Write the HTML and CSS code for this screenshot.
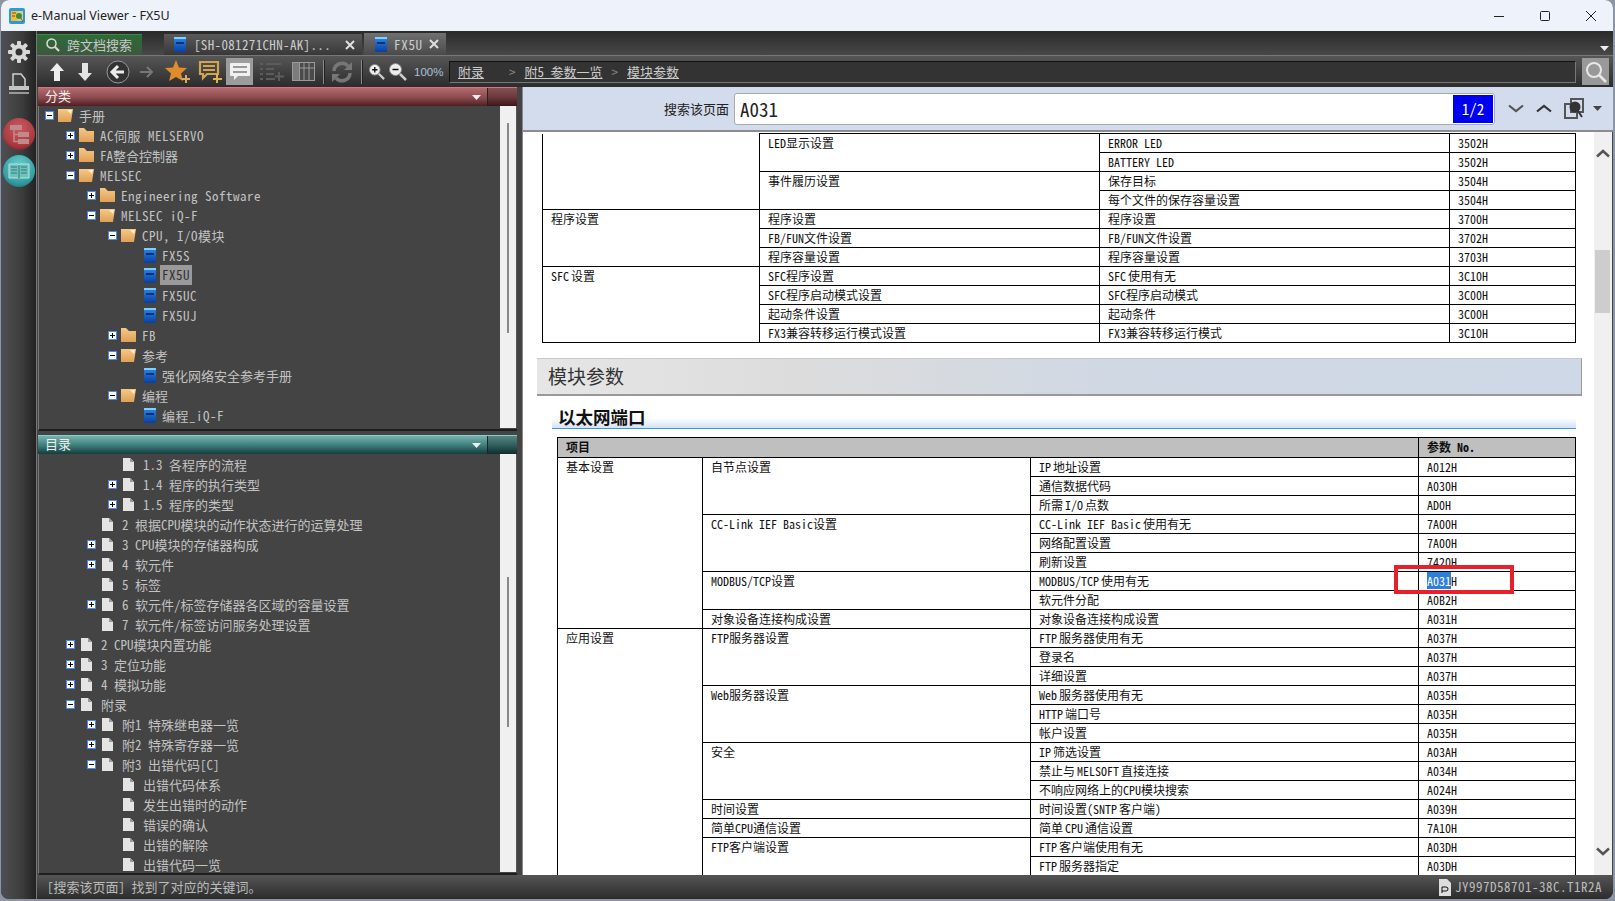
FILE: index.html
```html
<!DOCTYPE html>
<html lang="zh-CN">
<head>
<meta charset="utf-8">
<title>e-Manual Viewer - FX5U</title>
<link rel="stylesheet" href="styles.css">
</head>
<body>
<svg class="defs" width="0" height="0" aria-hidden="true">
  <defs>
    <linearGradient id="gFolder" x1="0" y1="0" x2="0" y2="1"><stop offset="0" stop-color="#f6c887"/><stop offset="1" stop-color="#dfa055"/></linearGradient>
    <linearGradient id="gBook" x1="0" y1="0" x2="0" y2="1"><stop offset="0" stop-color="#2a8ae8"/><stop offset="1" stop-color="#0a3f9e"/></linearGradient>
    <radialGradient id="gRed" cx=".5" cy=".32" r=".72"><stop offset="0" stop-color="#cc5a60"/><stop offset=".75" stop-color="#a83a40"/><stop offset="1" stop-color="#822228"/></radialGradient>
    <radialGradient id="gTeal" cx=".5" cy=".32" r=".72"><stop offset="0" stop-color="#66d0d0"/><stop offset=".75" stop-color="#359ea2"/><stop offset="1" stop-color="#1f7c82"/></radialGradient>
    <symbol id="fclosed" viewBox="0 0 15 14"><path d="M0 0H5L8 3H15V14H0Z" fill="url(#gFolder)"/></symbol>
    <symbol id="fopen" viewBox="0 0 15 14"><path d="M0 1H15L13 14H0Z" fill="url(#gFolder)"/><path d="M9 2H14L13 6Z" fill="#fbeec8"/></symbol>
    <symbol id="book" viewBox="0 0 12 15"><rect width="12" height="15" rx="1" fill="url(#gBook)"/><rect x="0" y="0" width="12" height="2" fill="#7fd0ff"/><rect x="2" y="5" width="8" height="2" fill="#0a2f80"/></symbol>
    <symbol id="doc" viewBox="0 0 11 13"><path d="M0 0H7L11 4V13H0Z" fill="#e4e4e4"/><path d="M7 0L11 4H7Z" fill="#9a9a9a"/></symbol>
    <symbol id="plus" viewBox="0 0 9 9"><rect x=".5" y=".5" width="8" height="8" fill="#fff" stroke="#4a8af0"/><path d="M2 4.5H7M4.500 2V7" stroke="#000"/></symbol>
    <symbol id="minus" viewBox="0 0 9 9"><rect x=".5" y=".5" width="8" height="8" fill="#fff" stroke="#4a8af0"/><path d="M2 4.500H7" stroke="#000"/></symbol>
    <symbol id="x" viewBox="0 0 10 10"><path d="M1 1L9 9M9 1L1 9" stroke="#e0e0e0" stroke-width="2"/></symbol>
    <symbol id="arrowdn" viewBox="0 0 9 5"><path d="M0 0H9L4.500 5Z" fill="#eee"/></symbol>
  </defs>
</svg>
<div class="window">
  <header class="title">
    <svg class="appicon" width="16" height="16" viewBox="0 0 16 16"><rect width="16" height="16" rx="2" fill="#2a9ae0"/><rect x="2" y="3" width="6" height="10" fill="#f0c030"/><rect x="8" y="3" width="6" height="10" fill="#e8d060"/><circle cx="10" cy="8" r="3" fill="#3a8a50"/><path d="M3 5H7M3 8H6" stroke="#a04020"/><path d="M12 10L14 14" stroke="#c04030"/></svg>
    <span class="title-text">e-Manual Viewer - FX5U</span>
    <div class="winbtns">
      <svg class="winbtn" width="10" height="10" viewBox="0 0 10 10"><path d="M0 5.500H10" stroke="#222"/></svg>
      <svg class="winbtn" width="10" height="10" viewBox="0 0 10 10"><rect x=".5" y=".5" width="9" height="9" rx="1" fill="none" stroke="#222"/></svg>
      <svg class="winbtn" width="10" height="10" viewBox="0 0 10 10"><path d="M0 0L10 10M10 0L0 10" stroke="#222"/></svg>
    </div>
  </header>
  <div class="app">
    <aside class="rail">
      <svg class="r-gear" width="22" height="22" viewBox="0 0 22 22"><g fill="#d8d8d8"><circle cx="11" cy="11" r="7.500"/><rect x="9" y="0" width="4" height="22" rx="1"/><rect x="0" y="9" width="22" height="4" rx="1"/><rect x="9" y="0" width="4" height="22" rx="1" transform="rotate(45 11 11)"/><rect x="9" y="0" width="4" height="22" rx="1" transform="rotate(-45 11 11)"/></g><circle cx="11" cy="11" r="3.500" fill="#333"/></svg>
      <svg class="r-print" width="20" height="22" viewBox="0 0 20 22"><path d="M4 13V1H12L16 6V13" fill="none" stroke="#d0d0d0" stroke-width="1.500"/><rect x="0" y="13" width="20" height="4" fill="#c4c4c4"/><rect x="0" y="19" width="20" height="2" fill="#999"/></svg>
      <svg class="r-ball" width="32" height="32" viewBox="0 0 32 32"><circle cx="16" cy="16" r="16" fill="url(#gRed)"/><g fill="#c08a8c"><rect x="7" y="7" width="12" height="5"/><rect x="15" y="14" width="11" height="5"/><rect x="15" y="21" width="11" height="5"/></g><path d="M11 12V23.500H15M11 16.500H15" fill="none" stroke="#c08a8c" stroke-width="1.500"/></svg>
      <svg class="r-ball b2" width="32" height="32" viewBox="0 0 32 32"><circle cx="16" cy="16" r="16" fill="url(#gTeal)"/><path d="M6 9H15L16 10L17 9H26V23H17L16 24L15 23H6Z" fill="#70c0bc" stroke="#b8e4e0"/><path d="M8 12H14M8 15H14M8 18H14M18 12H24M18 15H24M18 18H24M16 10V24" stroke="#2a7c7c"/></svg>
    </aside>
    <div class="main">
      <nav class="tabs">
        <div class="tab tab-search">
          <svg width="14" height="14" viewBox="0 0 14 14"><circle cx="5.500" cy="5.500" r="4.500" fill="none" stroke="#ddd" stroke-width="1.500"/><path d="M9 9L13 13" stroke="#ddd" stroke-width="2"/></svg>
          <span class="tab-search-label">跨文档搜索</span>
        </div>
        <div class="tab tab-doc">
          <svg class="ic-book" width="12" height="15"><use href="#book"/></svg>
          <span class="tab-label">[SH-081271CHN-AK]...</span>
          <svg class="ic-x" width="10" height="10"><use href="#x"/></svg>
        </div>
        <div class="tab tab-active">
          <svg class="ic-book" width="12" height="15"><use href="#book"/></svg>
          <span class="tab-label">FX5U</span>
          <svg class="ic-x" width="10" height="10"><use href="#x"/></svg>
        </div>
        <svg class="tabs-more" width="9" height="5"><use href="#arrowdn"/></svg>
      </nav>
      <div class="toolbar">
        <div class="tb w28"><svg width="14" height="18" viewBox="0 0 14 18"><path d="M7 0L14 8H10V18H4V8H0Z" fill="#eee"/></svg></div>
        <div class="tb w28"><svg width="14" height="18" viewBox="0 0 14 18"><path d="M7 18L14 10H10V0H4V10H0Z" fill="#e4e4e4"/></svg></div>
        <div class="tb w38"><svg width="24" height="24" viewBox="0 0 24 24"><circle cx="12" cy="12" r="11" fill="#333" stroke="#999"/><path d="M12 6L6 12L12 18M6.500 12H18" fill="none" stroke="#eee" stroke-width="3"/></svg></div>
        <div class="tb w18"><svg width="13" height="12" viewBox="0 0 13 12"><path d="M7 1L12 6L7 11M12 6H0" fill="none" stroke="#777" stroke-width="2"/></svg></div>
        <div class="tb w38 ml4"><svg width="26" height="24" viewBox="0 0 26 24"><path d="M11 0L14 7.500L22 8L16 13.500L18 21L11 17L4 21L6 13.500L0 8L8 7.500Z" fill="#e08c2c"/><path d="M21 15V23M17 19H25" stroke="#e0a85a" stroke-width="2"/></svg></div>
        <div class="tb w26"><svg width="24" height="24" viewBox="0 0 24 24"><path d="M2 2H20V14H9L5 18V14H2Z" fill="none" stroke="#d4a44c" stroke-width="2.200"/><path d="M5 6H17M5 10H17" stroke="#d4a44c" stroke-width="2"/><path d="M19 14V23M15 19H24" stroke="#e0b050" stroke-width="2"/></svg></div>
        <div class="tb w27 tb-on"><svg width="22" height="20" viewBox="0 0 22 20"><path d="M2 1H20Q21 1 21 2V13Q21 14 20 14H9L5 18V14H2Q1 14 1 13V2Q1 1 2 1Z" fill="#f0f0f0"/><path d="M4 5H18M4 10H18" stroke="#999" stroke-width="2"/></svg></div>
        <div class="tb w38"><svg width="24" height="20" viewBox="0 0 24 20"><path d="M0 2H3M6 2H21M0 7H3M6 7H14M0 12H3M6 12H14M0 17H3M6 17H15" stroke="#5c5c5c" stroke-width="2"/><path d="M19 10V19M15 14.500H24" stroke="#5c5c5c" stroke-width="2"/></svg></div>
        <div class="tb w24"><svg width="23" height="19" viewBox="0 0 23 19"><rect width="23" height="19" fill="#9a9a9a"/><rect x="1" y="1" width="6" height="17" fill="#7c7c7c"/><rect x="8" y="1" width="14" height="17" fill="#4a4a4a"/><path d="M12 1V18M17 1V18M8 6H22" stroke="#9a9a9a"/></svg></div>
        <div class="tb w16"><span class="sep"></span></div>
        <div class="tb w22"><svg width="22" height="22" viewBox="0 0 22 22"><path d="M3 10A8 8 0 0 1 17 5" fill="none" stroke="#777" stroke-width="3.500"/><path d="M19 12A8 8 0 0 1 5 17" fill="none" stroke="#777" stroke-width="3.500"/><path d="M21 1V9H13Z" fill="#777"/><path d="M1 21V13H9Z" fill="#777"/></svg></div>
        <div class="tb w16"><span class="sep"></span></div>
        <div class="tb w16"><svg width="18" height="18" viewBox="0 0 18 18"><circle cx="6.500" cy="6.500" r="6" fill="#eee" stroke="#888"/><path d="M3.500 6.500H9.500M6.500 3.500V9.500" stroke="#111" stroke-width="1.500"/><path d="M11 11L17 17" stroke="#ccc" stroke-width="2.500"/></svg></div>
        <div class="tb w26"><svg width="18" height="18" viewBox="0 0 18 18"><circle cx="6.500" cy="6.500" r="6" fill="#eee" stroke="#888"/><path d="M3.500 6.500H9.500" stroke="#111" stroke-width="1.500"/><path d="M11 11L17 17" stroke="#ccc" stroke-width="2.500"/></svg></div>
        <div class="pct">100%</div>
        <div class="crumbs">
          <a class="crumb-first">附录</a><span class="gt">&gt;</span><a>附5 参数一览</a><span class="gt">&gt;</span><a>模块参数</a>
        </div>
        <div class="tb-find"><svg width="22" height="22" viewBox="0 0 22 22"><circle cx="9" cy="9" r="7" fill="none" stroke="#e8e8e8" stroke-width="2"/><path d="M14 14L21 21" stroke="#e8e8e8" stroke-width="2.500"/></svg></div>
      </div>
      <div class="panes">
        <section class="left">
          <div class="phead red"><span class="phead-title">分类</span><svg class="phead-arrow" width="9" height="5"><use href="#arrowdn"/></svg><span class="phead-end"></span></div>
          <div class="tree tree-top">
            <ul class="rows">
              <li class="row l0"><svg class="tog" width="9" height="9"><use href="#minus"/></svg><svg class="ico" width="15" height="14"><use href="#fopen"/></svg><span class="lbl">手册</span></li>
              <li class="row l1"><svg class="tog" width="9" height="9"><use href="#plus"/></svg><svg class="ico" width="15" height="14"><use href="#fclosed"/></svg><span class="lbl la">AC伺服 MELSERVO</span></li>
              <li class="row l1"><svg class="tog" width="9" height="9"><use href="#plus"/></svg><svg class="ico" width="15" height="14"><use href="#fclosed"/></svg><span class="lbl">FA整合控制器</span></li>
              <li class="row l1"><svg class="tog" width="9" height="9"><use href="#minus"/></svg><svg class="ico" width="15" height="14"><use href="#fopen"/></svg><span class="lbl la">MELSEC</span></li>
              <li class="row l2"><svg class="tog" width="9" height="9"><use href="#plus"/></svg><svg class="ico" width="15" height="14"><use href="#fclosed"/></svg><span class="lbl la">Engineering Software</span></li>
              <li class="row l2"><svg class="tog" width="9" height="9"><use href="#minus"/></svg><svg class="ico" width="15" height="14"><use href="#fopen"/></svg><span class="lbl la">MELSEC iQ-F</span></li>
              <li class="row l3"><svg class="tog" width="9" height="9"><use href="#minus"/></svg><svg class="ico" width="15" height="14"><use href="#fopen"/></svg><span class="lbl la">CPU, I/O模块</span></li>
              <li class="row l4"><span class="tog"></span><svg class="ico bk" width="12" height="15"><use href="#book"/></svg><span class="lbl la">FX5S</span></li>
              <li class="row l4"><span class="tog"></span><svg class="ico bk" width="12" height="15"><use href="#book"/></svg><span class="lbl la sel">FX5U</span></li>
              <li class="row l4"><span class="tog"></span><svg class="ico bk" width="12" height="15"><use href="#book"/></svg><span class="lbl la">FX5UC</span></li>
              <li class="row l4"><span class="tog"></span><svg class="ico bk" width="12" height="15"><use href="#book"/></svg><span class="lbl la">FX5UJ</span></li>
              <li class="row l3"><svg class="tog" width="9" height="9"><use href="#plus"/></svg><svg class="ico" width="15" height="14"><use href="#fclosed"/></svg><span class="lbl la">FB</span></li>
              <li class="row l3"><svg class="tog" width="9" height="9"><use href="#minus"/></svg><svg class="ico" width="15" height="14"><use href="#fopen"/></svg><span class="lbl">参考</span></li>
              <li class="row l4"><span class="tog"></span><svg class="ico bk" width="12" height="15"><use href="#book"/></svg><span class="lbl">强化网络安全参考手册</span></li>
              <li class="row l3"><svg class="tog" width="9" height="9"><use href="#minus"/></svg><svg class="ico" width="15" height="14"><use href="#fopen"/></svg><span class="lbl">编程</span></li>
              <li class="row l4"><span class="tog"></span><svg class="ico bk" width="12" height="15"><use href="#book"/></svg><span class="lbl la">编程_iQ-F</span></li>
            </ul>
            <div class="vbar vbar-top"><span class="vthumb"></span></div>
          </div>
          <div class="phead teal"><span class="phead-title">目录</span><svg class="phead-arrow" width="9" height="5"><use href="#arrowdn"/></svg><span class="phead-end"></span></div>
          <div class="tree tree-bottom">
            <ul class="rows">
              <li class="row l3"><span class="tog"></span><svg class="ico dc" width="11" height="13"><use href="#doc"/></svg><span class="lbl">1.3 各程序的流程</span></li>
              <li class="row l3"><svg class="tog" width="9" height="9"><use href="#plus"/></svg><svg class="ico dc" width="11" height="13"><use href="#doc"/></svg><span class="lbl">1.4 程序的执行类型</span></li>
              <li class="row l3"><svg class="tog" width="9" height="9"><use href="#plus"/></svg><svg class="ico dc" width="11" height="13"><use href="#doc"/></svg><span class="lbl">1.5 程序的类型</span></li>
              <li class="row l2"><span class="tog"></span><svg class="ico dc" width="11" height="13"><use href="#doc"/></svg><span class="lbl">2 根据CPU模块的动作状态进行的运算处理</span></li>
              <li class="row l2"><svg class="tog" width="9" height="9"><use href="#plus"/></svg><svg class="ico dc" width="11" height="13"><use href="#doc"/></svg><span class="lbl">3 CPU模块的存储器构成</span></li>
              <li class="row l2"><svg class="tog" width="9" height="9"><use href="#plus"/></svg><svg class="ico dc" width="11" height="13"><use href="#doc"/></svg><span class="lbl">4 软元件</span></li>
              <li class="row l2"><span class="tog"></span><svg class="ico dc" width="11" height="13"><use href="#doc"/></svg><span class="lbl">5 标签</span></li>
              <li class="row l2"><svg class="tog" width="9" height="9"><use href="#plus"/></svg><svg class="ico dc" width="11" height="13"><use href="#doc"/></svg><span class="lbl">6 软元件/标签存储器各区域的容量设置</span></li>
              <li class="row l2"><span class="tog"></span><svg class="ico dc" width="11" height="13"><use href="#doc"/></svg><span class="lbl">7 软元件/标签访问服务处理设置</span></li>
              <li class="row l1"><svg class="tog" width="9" height="9"><use href="#plus"/></svg><svg class="ico dc" width="11" height="13"><use href="#doc"/></svg><span class="lbl">2 CPU模块内置功能</span></li>
              <li class="row l1"><svg class="tog" width="9" height="9"><use href="#plus"/></svg><svg class="ico dc" width="11" height="13"><use href="#doc"/></svg><span class="lbl">3 定位功能</span></li>
              <li class="row l1"><svg class="tog" width="9" height="9"><use href="#plus"/></svg><svg class="ico dc" width="11" height="13"><use href="#doc"/></svg><span class="lbl">4 模拟功能</span></li>
              <li class="row l1"><svg class="tog" width="9" height="9"><use href="#minus"/></svg><svg class="ico dc" width="11" height="13"><use href="#doc"/></svg><span class="lbl">附录</span></li>
              <li class="row l2"><svg class="tog" width="9" height="9"><use href="#plus"/></svg><svg class="ico dc" width="11" height="13"><use href="#doc"/></svg><span class="lbl">附1 特殊继电器一览</span></li>
              <li class="row l2"><svg class="tog" width="9" height="9"><use href="#plus"/></svg><svg class="ico dc" width="11" height="13"><use href="#doc"/></svg><span class="lbl">附2 特殊寄存器一览</span></li>
              <li class="row l2"><svg class="tog" width="9" height="9"><use href="#minus"/></svg><svg class="ico dc" width="11" height="13"><use href="#doc"/></svg><span class="lbl">附3 出错代码[C]</span></li>
              <li class="row l3"><span class="tog"></span><svg class="ico dc" width="11" height="13"><use href="#doc"/></svg><span class="lbl">出错代码体系</span></li>
              <li class="row l3"><span class="tog"></span><svg class="ico dc" width="11" height="13"><use href="#doc"/></svg><span class="lbl">发生出错时的动作</span></li>
              <li class="row l3"><span class="tog"></span><svg class="ico dc" width="11" height="13"><use href="#doc"/></svg><span class="lbl">错误的确认</span></li>
              <li class="row l3"><span class="tog"></span><svg class="ico dc" width="11" height="13"><use href="#doc"/></svg><span class="lbl">出错的解除</span></li>
              <li class="row l3"><span class="tog"></span><svg class="ico dc" width="11" height="13"><use href="#doc"/></svg><span class="lbl">出错代码一览</span></li>
            </ul>
            <div class="vbar vbar-bottom"><span class="vthumb"></span></div>
          </div>
        </section>
        <section class="right">
          <div class="findbar">
            <label class="find-label">搜索该页面</label>
            <div class="find-input"><span class="find-text">A031</span><span class="find-count">1/2</span></div>
            <svg class="fb-ic fb-first" width="16" height="9" viewBox="0 0 16 9"><path d="M1 1.500L8 7L15 1.500" fill="none" stroke="#555" stroke-width="2.200"/></svg>
            <svg class="fb-ic" width="16" height="9" viewBox="0 0 16 9"><path d="M1 7.500L8 2L15 7.500" fill="none" stroke="#333" stroke-width="2.200"/></svg>
            <svg class="fb-ic" width="21" height="21" viewBox="0 0 21 21"><rect x="1" y="6" width="12" height="14" fill="none" stroke="#555" stroke-width="2"/><rect x="7" y="1" width="12" height="13" fill="none" stroke="#555" stroke-width="2"/><circle cx="11" cy="9" r="5.500" fill="#333"/><path d="M14 13L18 19" stroke="#333" stroke-width="2"/></svg>
            <svg class="fb-ic" width="9" height="5" viewBox="0 0 9 5"><path d="M0 0H9L4.500 5Z" fill="#444"/></svg>
          </div>
          <div class="docwrap">
            <div class="doc">
              <table class="grid t1">
                <colgroup><col class="c1a"><col class="c1b"><col class="c1c"><col class="c1d"></colgroup>
                <tr><td rowspan="4" class="notop"></td><td rowspan="2">LED显示设置</td><td>ERROR LED</td><td>3502H</td></tr>
                <tr><td>BATTERY LED</td><td>3502H</td></tr>
                <tr><td rowspan="2">事件履历设置</td><td>保存目标</td><td>3504H</td></tr>
                <tr><td>每个文件的保存容量设置</td><td>3504H</td></tr>
                <tr><td rowspan="3">程序设置</td><td>程序设置</td><td>程序设置</td><td>3700H</td></tr>
                <tr><td>FB/FUN文件设置</td><td>FB/FUN文件设置</td><td>3702H</td></tr>
                <tr><td>程序容量设置</td><td>程序容量设置</td><td>3703H</td></tr>
                <tr><td rowspan="4">SFC<i class="ts"></i>设置</td><td>SFC程序设置</td><td>SFC<i class="ts"></i>使用有无</td><td>3C10H</td></tr>
                <tr><td>SFC程序启动模式设置</td><td>SFC程序启动模式</td><td>3C00H</td></tr>
                <tr><td>起动条件设置</td><td>起动条件</td><td>3C00H</td></tr>
                <tr><td>FX3兼容转移运行模式设置</td><td>FX3兼容转移运行模式</td><td>3C10H</td></tr>
              </table>
              <h2 class="sec">模块参数</h2>
              <h3 class="sub"><span>以太网端口</span></h3>
              <table class="grid t2">
                <colgroup><col class="c2a"><col class="c2b"><col class="c2c"><col class="c2d"></colgroup>
                <tr class="hd"><th colspan="3">项目</th><th>参数 No.</th></tr>
                <tr><td rowspan="9">基本设置</td><td rowspan="3">自节点设置</td><td>IP<i class="ts"></i>地址设置</td><td>A012H</td></tr>
                <tr><td>通信数据代码</td><td>A030H</td></tr>
                <tr><td>所需<i class="ts"></i>I/O<i class="ts"></i>点数</td><td>AD0H</td></tr>
                <tr><td rowspan="3">CC-Link IEF Basic设置</td><td>CC-Link IEF Basic<i class="ts"></i>使用有无</td><td>7A00H</td></tr>
                <tr><td>网络配置设置</td><td>7A00H</td></tr>
                <tr><td>刷新设置</td><td>7420H</td></tr>
                <tr><td rowspan="2">MODBUS/TCP设置</td><td>MODBUS/TCP<i class="ts"></i>使用有无</td><td><mark class="hit">A031</mark>H</td></tr>
                <tr><td>软元件分配</td><td>A0B2H</td></tr>
                <tr><td>对象设备连接构成设置</td><td>对象设备连接构成设置</td><td>A031H</td></tr>
                <tr><td rowspan="13">应用设置</td><td rowspan="3">FTP服务器设置</td><td>FTP<i class="ts"></i>服务器使用有无</td><td>A037H</td></tr>
                <tr><td>登录名</td><td>A037H</td></tr>
                <tr><td>详细设置</td><td>A037H</td></tr>
                <tr><td rowspan="3">Web服务器设置</td><td>Web<i class="ts"></i>服务器使用有无</td><td>A035H</td></tr>
                <tr><td>HTTP<i class="ts"></i>端口号</td><td>A035H</td></tr>
                <tr><td>帐户设置</td><td>A035H</td></tr>
                <tr><td rowspan="3">安全</td><td>IP<i class="ts"></i>筛选设置</td><td>A03AH</td></tr>
                <tr><td>禁止与<i class="ts"></i>MELSOFT<i class="ts"></i>直接连接</td><td>A034H</td></tr>
                <tr><td>不响应网络上的CPU模块搜索</td><td>A024H</td></tr>
                <tr><td>时间设置</td><td>时间设置(SNTP<i class="ts"></i>客户端)</td><td>A039H</td></tr>
                <tr><td>简单CPU通信设置</td><td>简单<i class="ts"></i>CPU<i class="ts"></i>通信设置</td><td>7A10H</td></tr>
                <tr><td rowspan="2">FTP客户端设置</td><td>FTP<i class="ts"></i>客户端使用有无</td><td>A03DH</td></tr>
                <tr><td>FTP<i class="ts"></i>服务器指定</td><td>A03DH</td></tr>
              </table>
              <div class="redbox"></div>
            </div>
            <div class="docbar">
              <svg class="db-up" width="14" height="9" viewBox="0 0 14 9"><path d="M1 7.500L7 2L13 7.500" fill="none" stroke="#555" stroke-width="2.500"/></svg>
              <span class="db-thumb"></span>
              <svg class="db-dn" width="14" height="9" viewBox="0 0 14 9"><path d="M1 1.500L7 7L13 1.500" fill="none" stroke="#555" stroke-width="2.500"/></svg>
            </div>
          </div>
        </section>
      </div>
      <footer class="status">
        <span class="status-msg">[搜索该页面] 找到了对应的关键词。</span>
        <svg class="status-ic" width="12" height="17" viewBox="0 0 12 17"><path d="M0 0H8L12 4V17H0Z" fill="#ddd"/><path d="M3 14V8H7Q9 8 9 10T7 12H3" fill="none" stroke="#111"/></svg>
        <span class="status-id">JY997D58701-38C.T1R2A</span>
      </footer>
    </div>
  </div>
</div>
</body>
</html>
```
FILE: styles.css
```css
* { box-sizing: border-box; }
html, body { margin: 0; padding: 0; height: 100%; }
body {
  background: #8d95a5;
  font-family: "Noto Sans Mono CJK SC", "Liberation Mono", "Noto Sans CJK SC", monospace;
  overflow: hidden;
}
.defs { position: absolute; }
ul { list-style: none; margin: 0; padding: 0; }

.window {
  width: 1612px;
  height: 899px;
  margin-left: 1px;
  display: flex;
  flex-direction: column;
  border-radius: 8px;
  overflow: hidden;
  background: #333;
}

/* title bar */
.title {
  height: 31px;
  flex: none;
  display: flex;
  align-items: center;
  padding-left: 8px;
  background: #eef2fa;
}
.appicon { flex: none; }
.title-text {
  margin-left: 6px;
  font: 12.5px "Noto Sans", sans-serif;
  color: #222;
}
.winbtns { margin-left: auto; display: flex; gap: 36px; padding-right: 17px; }

/* app */
.app { flex: 1; display: flex; min-height: 0; }
.rail {
  width: 35px;
  flex: none;
  display: flex;
  flex-direction: column;
  align-items: center;
  background: linear-gradient(90deg, #4a4e58 0, #4b4b4b 15%, #3c3c3c 60%, #222 100%);
}
.r-gear { margin-top: 10px; }
.r-print { margin-top: 10px; }
.r-ball { margin-top: 23px; }
.r-ball.b2 { margin-top: 5px; }

.main { flex: 1; min-width: 0; display: flex; flex-direction: column; border-left: 1px solid #777; }

/* tabs */
.tabs {
  height: 24px;
  flex: none;
  display: flex;
  align-items: flex-end;
  background: linear-gradient(#2a2a2a, #484848);
  color: #ccc;
  font-size: 13px;
}
.tab { height: 21px; display: flex; align-items: center; flex: none; }
.tab-search {
  width: 105px;
  padding-left: 9px;
  gap: 7px;
  background: linear-gradient(#2f6a36, #3c583f);
  border-top: 1px solid #3c8a44;
  color: #c8c8c8;
}
.tab-search-label { padding-bottom: 2px; }
.tab-doc {
  width: 198px;
  margin-left: 22px;
  padding-left: 10px;
  background: linear-gradient(#5a5a5a, #383838);
}
.tab-active {
  width: 82px;
  margin-left: 2px;
  padding-left: 11px;
  height: 22px;
  background: linear-gradient(#707070, #4a4a4a);
}
.ic-book { flex: none; }
.tab-label { margin-left: 8px; flex: 1; white-space: nowrap; letter-spacing: .35px; }
.tab-active .tab-label { margin-left: 7px; letter-spacing: .7px; }
.ic-x { flex: none; margin-right: 7px; }
.tabs-more { margin-left: auto; margin-right: 4px; margin-bottom: 4px; }

/* toolbar */
.toolbar {
  height: 32px;
  flex: none;
  display: flex;
  align-items: center;
  padding-left: 6px;
  padding-right: 4px;
  border-top: 1px solid #777;
  background: linear-gradient(#565656, #2c2c2c);
}
.tb { height: 27px; display: flex; align-items: center; justify-content: center; flex: none; }
.w16 { width: 16px; } .w18 { width: 18px; } .w22 { width: 22px; } .w24 { width: 24px; }
.w26 { width: 26px; } .w27 { width: 27px; } .w28 { width: 28px; } .w38 { width: 38px; }
.ml4 { margin-left: 4px; }
.tb-on { background: #9c9c9c; margin-left: 3px; }
.sep { width: 1px; height: 24px; background: #8a8a8a; box-shadow: 1px 0 0 #222; }
.pct { width: 35px; margin-left: 3px; color: #a8c0dc; font: 11.5px "Liberation Sans", sans-serif; flex: none; }
.crumbs {
  flex: 1;
  height: 22px;
  display: flex;
  align-items: center;
  padding-left: 8px;
  gap: 9px;
  background: #333;
  border: 1px solid #777;
  border-top-color: #111;
  border-left-color: #111;
  color: #ccc;
  font-size: 13px;
}
.crumbs a { text-decoration: underline; }
.crumb-first { margin-right: 16px; }
.gt { color: #888; font-size: 13px; }
.tb-find { width: 27px; height: 27px; margin-left: 6px; background: #999; display: flex; align-items: center; justify-content: center; flex: none; }

/* panes */
.panes { flex: 1; min-height: 0; display: flex; background: #444; }
.left { width: 479px; flex: none; margin-left: 1px; display: flex; flex-direction: column; }
.phead { height: 19px; flex: none; display: flex; align-items: center; color: #eee; font-size: 13px; }
.red { background: linear-gradient(#b66a6e, #8a4a4e 55%, #4e1e22); border-top: 1px solid #c78; }
.teal { height: 19px; background: linear-gradient(#74b4ae, #3c7a78 55%, #143c3e); border-top: 1px solid #8cc; margin-top: 4px; }
.phead-title { margin-left: 7px; padding-bottom: 3px; }
.phead-arrow { margin-left: auto; margin-right: 6px; }
.phead-end { width: 30px; height: 100%; border-left: 1px solid #222; background: rgba(0, 0, 0, .25); }

.tree { display: flex; background: #444; border-left: 1px solid #777; min-height: 0; overflow: hidden; }
.tree-top { height: 325px; flex: none; border-bottom: 2px solid #1e1e1e; }
.tree-bottom { flex: 1; border-bottom: 2px solid #1e1e1e; }
.rows { flex: 1; min-width: 0; font-size: 13px; color: #c2c2c2; }
.tree-top .rows { margin-top: -1px; }
.row { height: 20px; display: flex; align-items: center; white-space: nowrap; }
.l0 { padding-left: 6px; } .l1 { padding-left: 27px; } .l2 { padding-left: 48px; }
.l3 { padding-left: 69px; } .l4 { padding-left: 90px; }
.tog { width: 9px; height: 9px; flex: none; display: block; }
.ico { margin-left: 4px; flex: none; }
.ico.bk { margin-left: 6px; }
.ico.dc { margin-left: 6px; margin-right: 3px; }
.lbl { margin-left: 6px; }
.la { letter-spacing: .5px; }
.sel { background: #9a9a9a; color: #333; padding: 0 2px; margin-left: 4px; height: 20px; line-height: 20px; }
.vbar { width: 17px; flex: none; background: #f0f0f0; border-right: 1px solid #555; position: relative; margin-bottom: 1px; }
.vthumb { position: absolute; left: 7px; width: 2px; background: #888; }
.vbar-top .vthumb { top: 17px; height: 210px; }
.vbar-bottom .vthumb { top: 123px; height: 150px; }

/* right */
.right { flex: 1; min-width: 0; display: flex; flex-direction: column; margin-left: 5px; border-left: 1px solid #888; background: #fff; }
.findbar {
  height: 45px;
  flex: none;
  display: flex;
  align-items: center;
  background: #d3dcec;
  border-bottom: 2px solid #8c8c8c;
  padding-left: 141px;
}
.find-label { font-size: 13px; color: #222; width: 70px; }
.find-input {
  width: 761px;
  height: 32px;
  display: flex;
  align-items: center;
  justify-content: space-between;
  background: #fff;
  border: 1px solid #aaa;
  border-radius: 3px;
  padding: 1px;
}
.find-text { font-size: 19px; margin-left: 4px; color: #222; }
.find-count { width: 40px; height: 28px; background: #0000f0; color: #fff; font-size: 15px; line-height: 28px; text-align: center; }
.fb-ic { flex: none; margin-left: 12px; }
.fb-ic.fb-first { margin-left: 13px; }
.fb-ic:last-child { margin-left: 8px; }

.docwrap { flex: 1; min-height: 0; display: flex; }
.doc { flex: 1; min-width: 0; overflow: hidden; position: relative; background: #fff; font-size: 12px; color: #111; }
.grid { border-collapse: collapse; table-layout: fixed; }
.grid td, .grid th { border: 1px solid #000; height: 19px; padding: 0 8px; vertical-align: top; line-height: 18px; text-align: left; white-space: nowrap; overflow: hidden; }
.ts { display: inline-block; width: 2px; }
.notop { border-top: none !important; }
.t1 { width: 1033px; margin: 1px 0 0 19px; }
.c1a { width: 217px; } .c1b { width: 340px; } .c1c { width: 350px; } .c1d { width: 126px; }
.t2 { width: 1018px; margin: 8px 0 0 34px; }
.c2a { width: 145px; } .c2b { width: 328px; } .c2c { width: 388px; } .c2d { width: 157px; }
.hd th { height: 20px; background: #bfbfbf; font-weight: 700; }
.hit { background: #2f7fd8; color: #fff; }
.sec {
  margin: 15px 0 0 14px;
  width: 1045px;
  height: 38px;
  padding-left: 11px;
  font-size: 19px;
  font-weight: 400;
  line-height: 33px;
  color: #333;
  background: linear-gradient(90deg, #e6e6e6, #dcdcdc 25%, #d0d8e4 55%, #cfd8e6);
  border-top: 1px solid #c8c8c8;
  border-bottom: 2px solid #999;
  border-right: 1px solid #999;
}
.sub {
  margin: 12px 0 0 29px;
  width: 1024px;
  height: 21px;
  padding-left: 6px;
  font-size: 17.5px;
  font-weight: 700;
  line-height: 18px;
  color: #111;
  background: linear-gradient(#fff 50%, #d2e2f4);
  border-bottom: 1px solid #3a9ae8;
}
.redbox { position: absolute; left: 871px; top: 433px; width: 120px; height: 29px; border: 4px solid #e8202c; }
.docbar { width: 19px; flex: none; background: #f0f0f0; position: relative; border-right: 1px solid #444; }
.db-up { position: absolute; top: 17px; left: 2px; }
.db-thumb { position: absolute; top: 118px; left: 1px; width: 15px; height: 63px; background: #cdcdcd; }
.db-dn { position: absolute; bottom: 19px; left: 2px; }

/* status */
.status {
  height: 24px;
  flex: none;
  display: flex;
  align-items: center;
  padding-left: 10px;
  padding-right: 11px;
  background: linear-gradient(#555, #2c2c2c);
  color: #bbb;
  font-size: 13px;
}
.status-msg { flex: 1; padding-bottom: 2px; }
.status-ic { flex: none; margin-right: 4px; }
.status-id { letter-spacing: .5px; padding-bottom: 2px; }
```
